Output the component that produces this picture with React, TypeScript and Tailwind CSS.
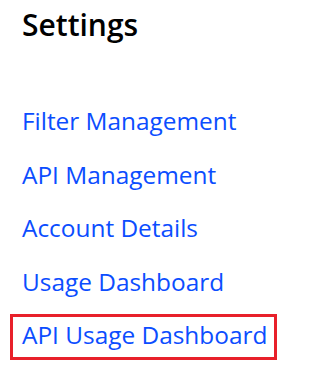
import React from "react"

const links = [
  "Filter Management",
  "API Management",
  "Account Details",
  "Usage Dashboard",
  "API Usage Dashboard",
]

const App: React.FC = () => {
  return (
    <div className="w-[332px] h-[390px] bg-white font-['Open_Sans',sans-serif]">
      <h2 className="pl-[22px] pt-[7px] text-[30px] leading-[36px] font-semibold text-black">
        Settings
      </h2>
      <nav className="flex flex-col gap-[7.5px] mt-[57px] pl-[10px]">
        {links.map((label, i) => {
          const active = i === links.length - 1
          return (
            <a
              key={label}
              href="#"
              className={
                "self-start border-[3px] pl-[9px] pr-[7px] pt-[3px] pb-[7px] text-[24.4px] leading-[30px] text-[#0b4dff] " +
                (active ? "border-[#e8202a]" : "border-transparent")
              }
            >
              {label}
            </a>
          )
        })}
      </nav>
    </div>
  )
}

export default App
